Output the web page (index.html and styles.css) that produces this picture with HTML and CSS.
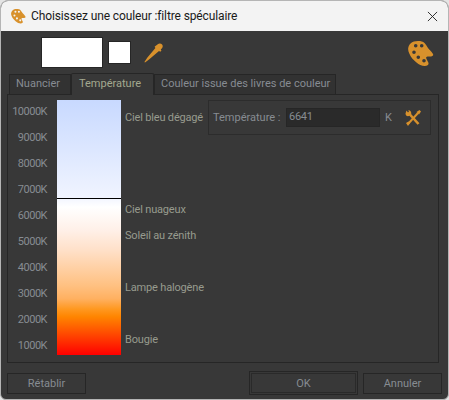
FILE: index.html
```html
<!DOCTYPE html>
<html lang="fr">
<head>
<meta charset="utf-8">
<title>Choisissez une couleur</title>
<link rel="stylesheet" href="styles.css">
</head>
<body>
<div class="window">
  <header class="titlebar">
    <svg class="title-icon" viewBox="0 0 26 26"><path class="ochre" fill-rule="evenodd" d="M10 0c3 0 5 .5 6.500 2 1.500 1.500 2.500 3.500 3.500 5 1.500 2 3.500 3.500 5 6 .6 1.300-.3 2.300-2 2.400l-3.500.1c-1.300.2-1.700 1.200-1 2.500l1.800 3.500c.8 2-.5 3.500-3.500 3.500-3.300 0-5.800-1.500-8.300-3.500-3-2.500-6-5.500-7.200-9C-.5 9-.3 5.500 2.500 2.500 4.500.7 7 0 10 0zM7.700 2.900a1.800 1.800 0 1 0 0 3.600 1.800 1.800 0 0 0 0-3.600zm6 0a1.800 1.800 0 1 0 0 3.600 1.800 1.800 0 0 0 0-3.600zM6 9.500a1.800 1.800 0 1 0 0 3.600 1.800 1.800 0 0 0 0-3.600zm4.300 5a1.800 1.800 0 1 0 0 3.600 1.800 1.800 0 0 0 0-3.600zm5.700 3.400a1.800 1.800 0 1 0 0 3.600 1.800 1.800 0 0 0 0-3.600z"/></svg>
    <span class="title-text">Choisissez une couleur :filtre spéculaire</span>
    <svg class="close" viewBox="0 0 12 12"><path d="M1 1l10 10M11 1L1 11"/></svg>
  </header>
  <main class="body">
    <div class="top">
      <div class="swatch swatch-big"></div>
      <div class="swatch swatch-small"></div>
      <svg class="dropper" viewBox="0 0 20 20"><path class="ochre" d="M13.800 1.200c1.300-1 3.300-.8 4.300.4 1 1.200.8 2.800-.3 3.800l-1 .9.600 1.400-1.200 1.100-1.200-.9L5 16.500 1 19.500l-.6-.6 3-4.300 8-9.500-.8-1.300 1.200-1z"/></svg>
      <svg class="palette" viewBox="0 0 26 26"><path class="ochre" fill-rule="evenodd" d="M10 0c3 0 5 .5 6.500 2 1.500 1.500 2.500 3.500 3.500 5 1.500 2 3.500 3.500 5 6 .6 1.300-.3 2.300-2 2.400l-3.500.1c-1.300.2-1.700 1.200-1 2.500l1.800 3.500c.8 2-.5 3.500-3.500 3.500-3.300 0-5.800-1.500-8.300-3.500-3-2.500-6-5.500-7.200-9C-.5 9-.3 5.500 2.500 2.500 4.500.7 7 0 10 0zM7.700 2.900a1.800 1.800 0 1 0 0 3.600 1.800 1.800 0 0 0 0-3.600zm6 0a1.800 1.800 0 1 0 0 3.600 1.800 1.800 0 0 0 0-3.600zM6 9.500a1.800 1.800 0 1 0 0 3.600 1.800 1.800 0 0 0 0-3.600zm4.300 5a1.800 1.800 0 1 0 0 3.600 1.800 1.800 0 0 0 0-3.600zm5.700 3.400a1.800 1.800 0 1 0 0 3.600 1.800 1.800 0 0 0 0-3.600z"/></svg>
    </div>
    <div class="tabs">
      <div class="tab tab-first">Nuancier</div>
      <div class="tab tab-active">Température</div>
      <div class="tab tab-last">Couleur issue des livres de couleur</div>
    </div>
    <section class="panel">
      <div class="scale">
        <span>10000K</span><span>9000K</span><span>8000K</span><span>7000K</span><span>6000K</span>
        <span>5000K</span><span>4000K</span><span>3000K</span><span>2000K</span><span>1000K</span>
      </div>
      <div class="bar"><div class="marker"></div></div>
      <div class="notes">
        <span class="note note-sky">Ciel bleu dégagé</span>
        <span class="note note-cloud">Ciel nuageux</span>
        <span class="note note-sun">Soleil au zénith</span>
        <span class="note note-lamp">Lampe halogène</span>
        <span class="note note-candle">Bougie</span>
      </div>
      <div class="group">
        <label class="group-label">Température :</label>
        <div class="input">6641</div>
        <span class="unit">K</span>
        <svg class="tools" viewBox="0 0 16 16"><path class="tool-stroke" d="M3 14L13 3"/><path class="tool-stroke-wide" d="M4 3.500L13.500 14"/><path class="ochre" d="M.5 3.500L1.500.5 3 2.500l1-1L3.200.3C5 0 6.500 1.500 6.300 4L4 6C2 6.500.5 5.500.5 3.500zM11.500 2L14.500 0l1.500 1.500-2 3zM1 13l2.500-1.500L5 13l-2 3z"/></svg>
      </div>
    </section>
    <footer class="buttons">
      <button class="btn btn-reset">Rétablir</button>
      <button class="btn btn-ok">OK</button>
      <button class="btn btn-cancel">Annuler</button>
    </footer>
  </main>
</div>
</body>
</html>
```

FILE: styles.css
```css
html, body { margin: 0; height: 100%; background: #e4e4e4; }
body { font-family: Roboto, sans-serif; font-size: 11px; }
.window { box-sizing: border-box; width: 449px; height: 400px; border: 1px solid #b5b5b5; border-radius: 8px 8px 6px 6px; overflow: hidden; display: flex; flex-direction: column; background: #383838; }
.ochre { fill: #d8912c; }
.titlebar { height: 30px; flex: none; display: flex; align-items: center; background: #f3f3f3; padding: 0 10px 0 10px; }
.title-icon { width: 15px; height: 15px; margin-right: 5px; }
.title-text { font-size: 12px; letter-spacing: -0.120px; color: #1a1a1a; flex: 1; }
.close { width: 11px; height: 11px; fill: none; stroke: #222; stroke-width: 1; }
.body { flex: 1; display: flex; flex-direction: column; padding: 5px 6px 7px 6px; color: #878c92; }
.top { box-sizing: border-box; height: 36px; display: flex; align-items: center; padding: 0 8px 4px 34px; flex: none; }
.swatch { background: #fff; box-sizing: border-box; border: 1px solid #262626; }
.swatch-big { width: 62px; height: 31px; }
.swatch-small { width: 23px; height: 23px; margin-left: 5px; }
.dropper { width: 20px; height: 20px; margin: 2px 0 0 13px; }
.palette { width: 26px; height: 26px; margin: 3px 0 0 auto; }
.tabs { display: flex; height: 22px; padding-left: 2px; flex: none; align-items: flex-end; }
.tab { box-sizing: border-box; height: 20px; line-height: 17px; padding: 0 6px; background: #323232; border: 1px solid #262626; border-bottom: 0; white-space: nowrap; }
.tab-first { width: 62px; }
.tab-active { width: 83px; height: 22px; line-height: 19px; padding-left: 7px; background: #383838; color: #a3a88f; position: relative; top: 1px; z-index: 1; border-radius: 2px 2px 0 0; }
.tab-last { width: 182px; }
.panel { box-sizing: border-box; width: 432px; height: 269px; flex: none; border: 1px solid #262626; display: flex; padding: 5px 7px 6px 0; }
.scale { width: 39px; flex: none; display: flex; flex-direction: column; align-items: flex-end; padding-top: 4px; letter-spacing: -0.500px; }
.scale span { height: 26px; flex: none; line-height: 16px; }
.bar { position: relative; width: 64px; height: 255px; margin-left: 10px; flex: none; background: linear-gradient(to bottom, #c8d9ff 0%, #f0f4ff 38%, #ffffff 42%, #fff0e8 51%, #ffe0c8 59%, #ffc080 73%, #ffb060 78%, #ff9820 82%, #ff8500 85%, #ff0000 100%); }
.marker { position: absolute; left: 0; right: 0; top: 98px; height: 1px; background: #000; }
.notes { width: 83px; flex: none; margin-left: 4px; display: flex; flex-direction: column; color: #979b8e; white-space: nowrap; letter-spacing: -0.170px; }
.note { height: 16px; line-height: 16px; flex: none; }
.note-sky { margin-top: 10px; }
.note-cloud { margin-top: 76px; }
.note-sun { margin-top: 10px; }
.note-lamp { margin-top: 36px; }
.note-candle { margin-top: 36px; }
.group { box-sizing: border-box; width: 223px; height: 35px; flex: none; border: 1px solid #2c2c2c; display: flex; align-items: center; padding-left: 4px; }
.group-label { width: 73px; }
.input { box-sizing: border-box; width: 94px; height: 19px; background: #2a2a2a; border: 1px solid #262626; padding-left: 2px; line-height: 16px; letter-spacing: -0.300px; }
.unit { margin-left: 5px; width: 20px; }
.tools { width: 16px; height: 16px; }
.tool-stroke { fill: none; stroke: #d8912c; stroke-width: 2; }
.tool-stroke-wide { fill: none; stroke: #d8912c; stroke-width: 2.600; }
.buttons { display: flex; padding-top: 8px; flex: none; align-items: center; }
.btn { box-sizing: border-box; height: 21px; font: inherit; background: #383838; color: #878c92; border: 1px solid #262626; padding: 0; }
.btn-reset { width: 79px; }
.btn-ok { width: 109px; height: 24px; margin-left: auto; box-shadow: inset 0 0 0 1px #383838, inset 0 0 0 2px #2a2a2a; }
.btn-cancel { width: 79px; margin-left: 5px; }
```
